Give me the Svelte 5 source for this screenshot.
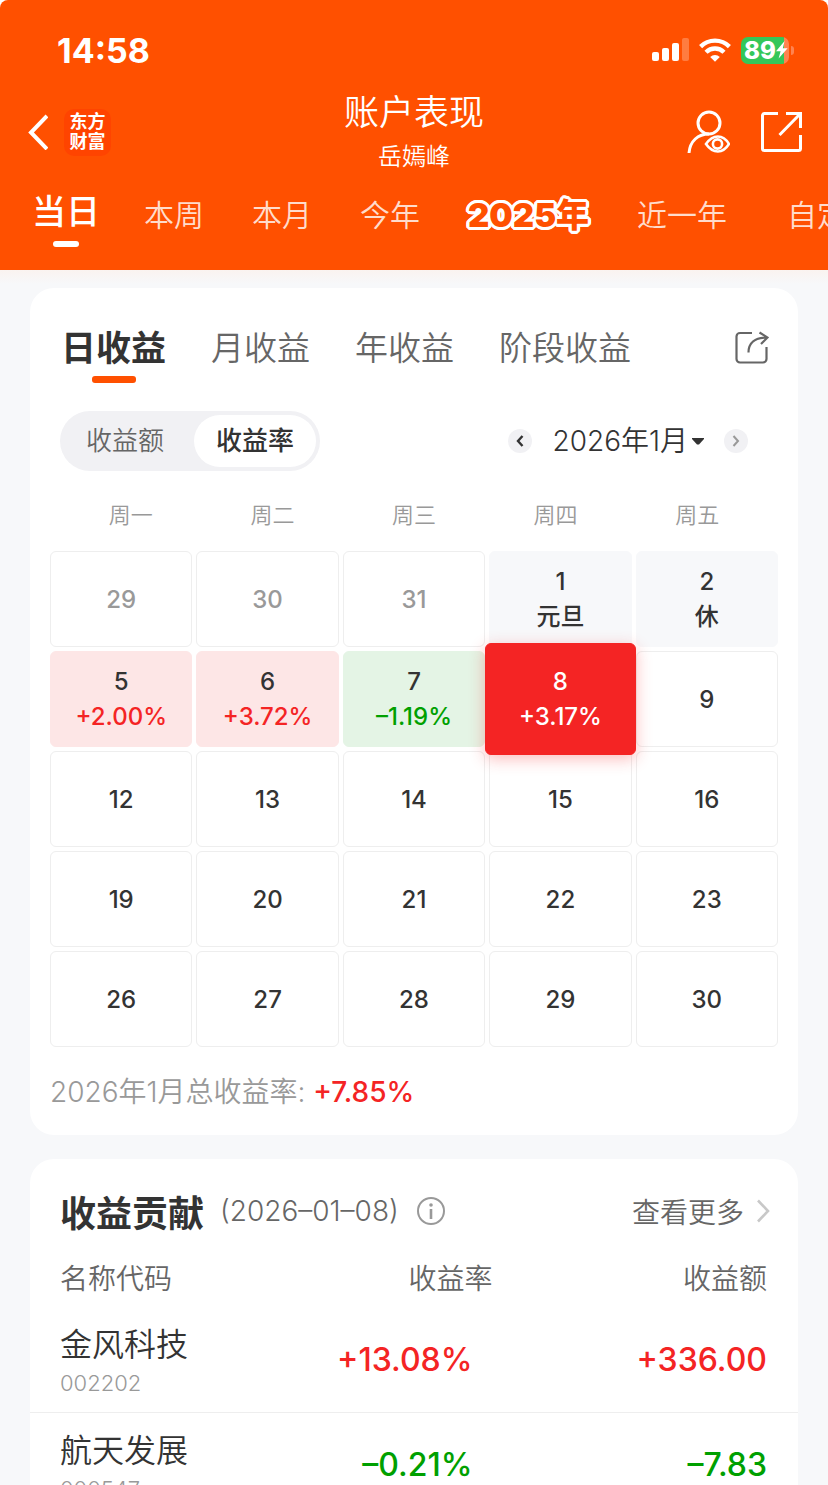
<script>
	const periods = ['当日', '本周', '本月', '今年', '2025年', '近一年', '自定义'];
	const profitTabs = ['日收益', '月收益', '年收益', '阶段收益'];
	const modes = ['收益额', '收益率'];
	const weekdays = ['周一', '周二', '周三', '周四', '周五'];

	const days = [
		{ day: 29, kind: 'other' },
		{ day: 30, kind: 'other' },
		{ day: 31, kind: 'other' },
		{ day: 1, kind: 'rest', note: '元旦' },
		{ day: 2, kind: 'rest', note: '休' },
		{ day: 5, kind: 'up', note: '+2.00%' },
		{ day: 6, kind: 'up', note: '+3.72%' },
		{ day: 7, kind: 'down', note: '–1.19%' },
		{ day: 8, kind: 'up', note: '+3.17%' },
		...[9, 12, 13, 14, 15, 16, 19, 20, 21, 22, 23, 26, 27, 28, 29, 30].map((day) => ({ day, kind: '' }))
	];

	const stocks = [
		{ name: '金风科技', code: '002202', rate: '+13.08%', amount: '+336.00' },
		{ name: '航天发展', code: '000547', rate: '–0.21%', amount: '–7.83' }
	];

	let period = '当日';
	let profitTab = '日收益';
	let mode = '收益率';
	let selected = 8;

	const trend = (value) => value.startsWith('+') ? 'red' : 'green';
</script>

<div class="page">
	<header>
		<div class="status">
			<span class="time">14:58</span>
			<div class="indicators">
				<svg width="37" height="24" viewBox="0 0 37 24" fill="#fff" aria-hidden="true">
					<rect x="0" y="14" width="7" height="9" rx="2" />
					<rect x="10" y="10" width="7" height="13" rx="2" />
					<rect x="20" y="5" width="7" height="18" rx="2" />
					<rect x="30" y="0" width="7" height="23" rx="2" opacity=".25" />
				</svg>
				<svg width="32" height="24" viewBox="0 0 32 24" aria-hidden="true">
					<g fill="none" stroke="#fff" stroke-width="4.4">
						<path d="M1.6 8.6a20.4 20.4 0 0 1 28.8 0" />
						<path d="M7 14.2a12.8 12.8 0 0 1 18 0" />
					</g>
					<path d="M11.2 18.9a7 7 0 0 1 9.6 0L16 23.8z" fill="#fff" />
				</svg>
				<span class="battery">
					<span class="level">89</span>
					<svg width="12" height="18" viewBox="0 0 12 18" aria-hidden="true">
						<path d="M8.6 0 0 10.2h4.6L2.6 17.6 11.6 7.2H6.8z" fill="#fff" />
					</svg>
				</span>
				<i class="cap"></i>
			</div>
		</div>

		<div class="titlebar">
			<div class="side">
				<button class="icon" aria-label="返回">
					<svg width="22" height="36" viewBox="0 0 22 36" fill="none" stroke="#fff" stroke-width="4">
						<path d="M21 2 5 18.5 21 35" />
					</svg>
				</button>
				<a class="logo" href="#home">东方<br />财富</a>
			</div>
			<div class="heading">
				<h1>账户表现</h1>
				<span>岳嫣峰</span>
			</div>
			<div class="side right">
				<button class="icon" aria-label="隐私">
					<svg width="44" height="44" viewBox="0 0 44 44" fill="none" stroke="#fff" stroke-width="3">
						<circle cx="23" cy="13" r="11" />
						<path d="M3 43C4 31 12 24 23 24" />
						<path d="M20 34C27 24 37 24 43 34 37 44 27 44 20 34Z" stroke-width="2.6" />
						<circle cx="31.5" cy="34" r="4.6" stroke-width="2.6" />
					</svg>
				</button>
				<button class="icon" aria-label="分享">
					<svg width="42" height="42" viewBox="0 0 42 42" fill="none" stroke="#fff" stroke-width="3">
						<path d="M18 2.5H4.500a2 2 0 0 0-2 2v33a2 2 0 0 0 2 2h34a2 2 0 0 0 2-2V24" />
						<path d="M26 2.5h14.500V17M40 3 19.500 24" />
					</svg>
				</button>
			</div>
		</div>

		<nav class="periods">
			{#each periods as item}
				<button class:active={period === item} class:year={item === '2025年'} on:click={() => period = item}>{item}</button>
			{/each}
		</nav>
	</header>

	<main>
		<section class="card calendar">
			<div class="tabs">
				{#each profitTabs as item}
					<button class:active={profitTab === item} on:click={() => profitTab = item}>{item}</button>
				{/each}
				<button class="icon share" aria-label="分享收益">
					<svg width="34" height="34" viewBox="0 0 34 34" fill="none" stroke="#666" stroke-width="2.2">
						<path d="M17 2H5a3.500 3.500 0 0 0-3.500 3.500v22.500A3.500 3.500 0 0 0 5 31.500h23a3.500 3.500 0 0 0 3.500-3.500V16" />
						<path d="M13.500 21.500C13.500 12 20 6.500 32 6.500M24.500 1.500l8 5-6.500 6.500" />
					</svg>
				</button>
			</div>

			<div class="tools">
				<div class="switch">
					{#each modes as item}
						<button class:on={mode === item} on:click={() => mode = item}>{item}</button>
					{/each}
				</div>
				<div class="month">
					<button class="step" aria-label="上个月">
						<svg width="8" height="12" viewBox="0 0 8 12" fill="none" stroke="#333" stroke-width="2.4"><path d="M6.500 1 2 6l4.500 5" /></svg>
					</button>
					<button class="current">
						2026年1月
						<svg width="12" height="7" viewBox="0 0 12 7"><path d="M0 0h12v1L7 6.500H5L0 1z" fill="#333" /></svg>
					</button>
					<button class="step" aria-label="下个月">
						<svg width="8" height="12" viewBox="0 0 8 12" fill="none" stroke="#999" stroke-width="2"><path d="M1.500 1 6 6l-4.500 5" /></svg>
					</button>
				</div>
			</div>

			<div class="weekdays">
				{#each weekdays as item}
					<span>{item}</span>
				{/each}
			</div>
			<div class="days">
				{#each days as item}
					<button class="day {item.kind}" class:selected={selected === item.day} on:click={() => selected = item.day}>
						<span>{item.day}</span>
						{#if item.note}<span class="note">{item.note}</span>{/if}
					</button>
				{/each}
			</div>

			<p class="total">2026年1月总收益率: <b>+7.85%</b></p>
		</section>

		<section class="card contribution">
			<div class="caption">
				<h2>收益贡献</h2>
				<span class="date">(2026–01–08)</span>
				<button class="icon" aria-label="说明">
					<svg width="28" height="28" viewBox="0 0 28 28" fill="none" stroke="#999" stroke-width="2">
						<circle cx="14" cy="14" r="13" />
						<path d="M14 12v10" stroke-width="2.6" />
						<circle cx="14" cy="8" r="1.8" fill="#999" stroke="none" />
					</svg>
				</button>
				<a class="more" href="#more">
					查看更多
					<svg width="14" height="24" viewBox="0 0 14 24" fill="none" stroke="#c8c8c8" stroke-width="2.6"><path d="M2 1.500 12 12 2 22.500" /></svg>
				</a>
			</div>
			<table>
				<thead>
					<tr><th class="name">名称代码</th><th class="rate">收益率</th><th>收益额</th></tr>
				</thead>
				<tbody>
					{#each stocks as stock}
						<tr>
							<td class="name">{stock.name}<small>{stock.code}</small></td>
							<td class="rate {trend(stock.rate)}">{stock.rate}</td>
							<td class={trend(stock.amount)}>{stock.amount}</td>
						</tr>
					{/each}
				</tbody>
			</table>
		</section>
	</main>
</div>

<style>
	:global(body) {
		background: #fff;
	}

	.page {
		height: 100vh;
		overflow-y: auto;
		scrollbar-width: none;
		border-radius: 8px 8px 0 0;
		background: #f7f8fa;
		color: #333;
		font-family: Inter, "Noto Sans CJK SC", sans-serif;
		font-weight: 350;
	}

	button {
		padding: 0;
		border: 0;
		background: none;
		color: inherit;
		font: inherit;
		white-space: nowrap;
		cursor: pointer;
	}

	a {
		color: inherit;
		text-decoration: none;
	}

	svg {
		display: block;
		flex: none;
	}

	h1, h2, p {
		margin: 0;
	}

	header {
		background: #ff5000;
		color: #fff;
		overflow: hidden;
	}

	.status {
		display: flex;
		justify-content: space-between;
		align-items: center;
		height: 64px;
		padding: 18px 34px 0 57px;
	}

	.time {
		font-size: 34px;
		font-weight: 700;
	}

	.indicators {
		display: flex;
		align-items: center;
		gap: 10px;
	}

	.battery {
		display: flex;
		align-items: center;
		width: 48px;
		height: 27px;
		padding-left: 3px;
		box-sizing: border-box;
		border-radius: 7px;
		background: linear-gradient(to right, #34c759 90%, #ff8350 90%);
	}

	.level {
		font-size: 24px;
		line-height: 27px;
		font-weight: 800;
	}

	.cap {
		width: 3px;
		height: 9px;
		margin-left: -8px;
		border-radius: 0 4px 4px 0;
		background: #ff8350;
	}

	.titlebar {
		display: grid;
		grid-template-columns: 1fr auto 1fr;
		align-items: center;
		height: 92px;
		margin-top: 4px;
		padding: 0 26px;
	}

	.side {
		display: flex;
		align-items: center;
		gap: 16px;
	}

	.right {
		justify-content: flex-end;
		gap: 30px;
	}

	.logo {
		width: 47px;
		height: 47px;
		box-sizing: border-box;
		padding-top: 3px;
		border-radius: 10px;
		background: #ff4400;
		font-size: 18px;
		line-height: 20px;
		font-weight: 700;
		text-align: center;
	}

	.heading {
		text-align: center;
	}

	h1 {
		font-size: 35px;
		line-height: 46px;
		font-weight: 350;
	}

	.heading span {
		display: block;
		padding-top: 4px;
		font-size: 24px;
		line-height: 36px;
	}

	.periods {
		display: flex;
		gap: 44px;
		height: 92px;
		padding: 0 0 18px 32px;
		box-sizing: border-box;
		align-items: center;
	}

	.periods button {
		padding-right: 4px;
		font-size: 30px;
		line-height: 60px;
		color: #ffdccc;
	}

	.periods .active {
		position: relative;
		margin-bottom: 6px;
		padding-right: 0;
		font-size: 34px;
		font-weight: 500;
		color: #fff;
	}

	.periods button:last-child {
		margin-left: 12px;
	}

	.periods .active::after,
	.tabs .active::after {
		content: "";
		position: absolute;
		left: 50%;
		bottom: -5px;
		width: 26px;
		height: 6px;
		margin-left: -13px;
		border-radius: 3px;
		background: #fff;
	}

	/* white outline built from shadows so the corners stay round */
	.periods .year {
		font-size: 33px;
		font-weight: 900;
		color: #ff5000;
		text-shadow:
			3px 0 #fff, -3px 0 #fff, 0 3px #fff, 0 -3px #fff,
			2px 2px #fff, -2px 2px #fff, 2px -2px #fff, -2px -2px #fff,
			3px 1px #fff, 3px -1px #fff, -3px 1px #fff, -3px -1px #fff,
			1px 3px #fff, -1px 3px #fff, 1px -3px #fff, -1px -3px #fff;
	}

	main {
		display: flex;
		flex-direction: column;
		gap: 24px;
		padding: 18px 30px 0;
		background: linear-gradient(#faf3f0, #f7f8fa 14px);
	}

	.card {
		border-radius: 24px;
		background: #fff;
	}

	.calendar {
		padding-bottom: 20px;
	}

	.tabs {
		display: flex;
		align-items: center;
		gap: 45px;
		height: 120px;
		padding: 0 29px 0 31px;
	}

	.tabs button {
		font-size: 33px;
		line-height: 56px;
		color: #666;
	}

	.tabs .active {
		position: relative;
		font-size: 35px;
		font-weight: 700;
		color: #333;
	}

	.tabs .active::after {
		bottom: -7px;
		width: 44px;
		height: 7px;
		margin-left: -22px;
		background: #ff5000;
	}

	.tabs .share {
		margin-left: auto;
	}

	.tools {
		display: flex;
		justify-content: space-between;
		align-items: center;
		height: 60px;
		margin-top: 3px;
		padding: 0 50px 0 30px;
	}

	.switch {
		display: flex;
		gap: 8px;
		padding: 4px;
		border-radius: 30px;
		background: #f1f1f4;
	}

	.switch button {
		height: 52px;
		padding: 0 22px;
		border-radius: 26px;
		font-size: 26px;
		line-height: 50px;
		color: #666;
	}

	.switch .on {
		background: #fff;
		font-weight: 500;
		color: #333;
	}

	.month,
	.current {
		display: flex;
		align-items: center;
	}

	.month {
		gap: 20px;
	}

	.current {
		gap: 4px;
		font-size: 28px;
		line-height: 40px;
	}

	.step {
		display: grid;
		place-items: center;
		width: 24px;
		height: 24px;
		border-radius: 50%;
		background: #f1f1f4;
	}

	.weekdays {
		display: grid;
		grid-template-columns: repeat(5, 1fr);
		height: 80px;
		padding: 0 30px;
		text-align: center;
		font-size: 22px;
		line-height: 88px;
		color: #999;
	}

	.days {
		display: grid;
		grid-template-columns: repeat(5, 1fr);
		grid-auto-rows: 96px;
		gap: 4px;
		padding: 0 20px;
	}

	.day {
		display: flex;
		flex-direction: column;
		align-items: center;
		justify-content: center;
		border: 1px solid #eee;
		border-radius: 6px;
		font-size: 24px;
		line-height: 35px;
		font-weight: 500;
	}

	.day.other {
		color: #999;
	}

	.day.rest {
		border-color: #f7f8fa;
		background: #f7f8fa;
	}

	.day.up {
		border-color: #fde6e6;
		background: #fde6e6;
	}

	.day.down {
		border-color: #e4f4e5;
		background: #e4f4e5;
	}

	.up .note {
		color: #f42424;
	}

	.down .note {
		color: #00a000;
	}

	.day.selected {
		z-index: 1;
		margin: -8px -4px;
		border-color: #f42424;
		background: #f42424;
		box-shadow: 0 4px 16px rgba(244, 36, 36, .3);
		color: #fff;
	}

	.selected .note {
		color: #fff;
	}

	.total {
		padding: 23px 20px 1px;
		font-size: 28px;
		line-height: 44px;
		color: #999;
	}

	.total b {
		font-weight: 500;
		color: #f42424;
	}

	.caption {
		display: flex;
		align-items: center;
		height: 103px;
		padding: 0 28px 0 30px;
	}

	h2 {
		font-size: 36px;
		font-weight: 700;
	}

	.date {
		margin: 0 18px 0 16px;
		font-size: 28px;
		color: #666;
	}

	.more {
		display: flex;
		align-items: center;
		gap: 12px;
		margin-left: auto;
		font-size: 28px;
		color: #666;
	}

	table {
		width: 100%;
		table-layout: fixed;
		border-collapse: collapse;
	}

	th,
	td {
		box-sizing: border-box;
		padding: 0 31px 0 0;
		text-align: right;
	}

	th {
		padding-bottom: 11px;
		font-size: 28px;
		line-height: 34px;
		font-weight: 350;
		color: #666;
	}

	td {
		height: 105px;
		border-bottom: 1px solid #eee;
		font-size: 32px;
		font-weight: 500;
	}

	.name {
		width: 35%;
		padding-left: 30px;
		padding-right: 0;
		text-align: left;
	}

	td.name {
		padding-top: 4px;
		font-weight: 350;
		line-height: 44px;
	}

	.rate {
		width: 26%;
		padding-right: 6px;
	}

	td.rate {
		padding-right: 26px;
	}

	small {
		display: block;
		font-size: 22px;
		line-height: 32px;
		color: #999;
	}

	.red {
		color: #f42424;
	}

	.green {
		color: #00a000;
	}
</style>
